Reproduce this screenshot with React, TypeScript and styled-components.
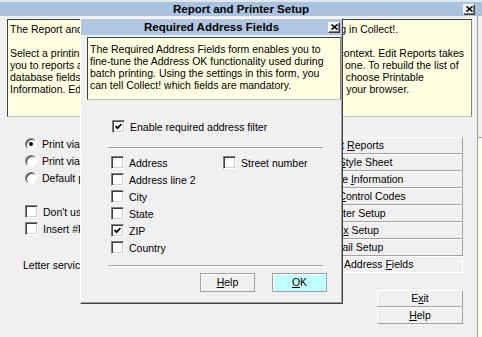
import React from 'react'
import styled, { createGlobalStyle } from 'styled-components'

const GlobalStyle = createGlobalStyle`
  html, body {
    margin: 0;
    padding: 0;
    background: #f0f0f0;
  }
  body {
    font-family: 'Liberation Sans', Arial, sans-serif;
    font-size: 10.5px;
    color: #000;
  }
`

const Screen = styled.div`
  position: relative;
  width: 482px;
  height: 337px;
  overflow: hidden;
  background: #f0f0f0;
`

const MainWindow = styled.div`
  display: flex;
  flex-direction: column;
  height: 100%;
  border-top: 2px solid #dfe7f1;
  box-sizing: border-box;
`

const TitleBar = styled.div<{ $height: number; $closeRight: number }>`
  display: grid;
  grid-template-columns: 1fr auto 1fr;
  align-items: center;
  height: ${({ $height }) => $height}px;
  flex: 0 0 auto;
  background: #a9c2df;
  font-weight: bold;
  font-size: 11.5px;
  white-space: nowrap;

  & > :last-child {
    justify-self: end;
    margin-right: ${({ $closeRight }) => $closeRight}px;
  }
`

const TitleText = styled.span`
  grid-column: 2;
  line-height: 14px;
`

const CloseButton = styled.div`
  display: flex;
  align-items: center;
  justify-content: center;
  width: 12px;
  height: 11px;
  box-sizing: border-box;
  background: #f0f0f0;
  border: 1px solid;
  border-color: #fff #404040 #404040 #fff;
  box-shadow: inset -1px -1px 0 #808080;
`

const Body = styled.div`
  display: flex;
  flex: 1;
`

const MainPane = styled.div`
  display: flex;
  flex-direction: column;
  width: 477px;
  border-right: 1px solid #a0a0a0;
`

const SideStrip = styled.div`
  flex: 1;
  display: flex;
  flex-direction: column;
`

const SidePanel = styled.div`
  margin-top: 121px;
  flex: 1;
  background: #fffef0;
  border-top: 1px solid #a0a0a0;
`

const InfoBox = styled.div<{ $width: number; $height: number; $padTop: number }>`
  box-sizing: border-box;
  width: ${({ $width }) => $width}px;
  height: ${({ $height }) => $height}px;
  padding: ${({ $padTop }) => $padTop}px 2px 0 2px;
  background: #ffffe1;
  border: 1px solid #404040;
  border-right-color: #808080;
  border-bottom-color: #c0c0c0;
  line-height: 12px;
  white-space: nowrap;
  overflow: hidden;
`

const MainInfo = styled(InfoBox)`
  margin: 3px 0 0 7px;
`

const Controls = styled.div`
  display: flex;
  justify-content: space-between;
  padding: 0 14px 0 25px;
`

const LeftColumn = styled.div`
  display: flex;
  flex-direction: column;
  padding-top: 18px;
`

const Row = styled.div<{ $gap?: number }>`
  display: flex;
  align-items: center;
  gap: ${({ $gap }) => $gap ?? 5}px;
  height: 17px;
  white-space: nowrap;
`

const Spacer = styled.div<{ $size: number }>`
  height: ${({ $size }) => $size}px;
  flex: 0 0 auto;
`

const RadioCircle = styled.span<{ $on?: boolean }>`
  position: relative;
  width: 12px;
  height: 12px;
  box-sizing: border-box;
  border-radius: 50%;
  background: #fff;
  border: 1px solid;
  border-color: #808080 #fff #fff #808080;
  box-shadow: inset 1px 1px 0 #404040;

  &::after {
    content: '';
    display: ${({ $on }) => ($on ? 'block' : 'none')};
    position: absolute;
    left: 3px;
    top: 3px;
    width: 4px;
    height: 4px;
    border-radius: 50%;
    background: #000;
  }
`

const CheckBox = styled.span`
  display: flex;
  align-items: center;
  justify-content: center;
  width: 13px;
  height: 13px;
  box-sizing: border-box;
  background: #fff;
  border: 1px solid;
  border-color: #808080 #fff #fff #808080;
  box-shadow: inset 1px 1px 0 #404040, inset -1px -1px 0 #d4d0c8;
`

const RightColumn = styled.div`
  display: flex;
  flex-direction: column;
  align-items: flex-end;
  padding-top: 20px;
`

const ButtonStack = styled.div<{ $width: number }>`
  display: flex;
  flex-direction: column;
  width: ${({ $width }) => $width}px;
`

const SideButton = styled.div<{ $active?: boolean }>`
  box-sizing: border-box;
  height: 17px;
  line-height: 15px;
  text-align: ${({ $active }) => ($active ? 'left' : 'center')};
  padding-left: ${({ $active }) => ($active ? '96px' : '0')};
  white-space: nowrap;
  border: 1px solid;
  border-color: ${({ $active }) =>
    $active ? '#fff #fff #fff #fff' : '#fff #a0a0a0 #a0a0a0 #fff'};
`

const U = styled.span`
  text-decoration: underline;
`

const Dialog = styled.div`
  position: absolute;
  left: 80px;
  top: 18px;
  width: 263px;
  height: 286px;
  box-sizing: border-box;
  display: flex;
  flex-direction: column;
  background: #f0f0f0;
  border: 1px solid;
  border-color: #fff #404040 #404040 #fff;
  box-shadow: inset -1px -1px 0 #a0a0a0;
`

const DialogTitleBar = styled(TitleBar)`
  background: #afc6e1;
`

const DialogInfo = styled(InfoBox)`
  margin: 2px 0 0 6px;
`

const OptionRow = styled(Row)<{ $indent: number }>`
  margin-left: ${({ $indent }) => $indent}px;
`

const Separator = styled.div<{ $top: number }>`
  margin: ${({ $top }) => $top}px 0 0 27px;
  width: 215px;
  height: 0;
  border-top: 1px solid #a0a0a0;
  border-bottom: 1px solid #fff;
`

const FieldGrid = styled.div`
  display: grid;
  grid-template-columns: 112px auto;
  margin: 5px 0 0 30px;
`

const DialogButtons = styled.div`
  display: flex;
  justify-content: flex-end;
  gap: 17px;
  margin-top: 6px;
  padding-right: 15px;
`

const PushButton = styled.div<{ $primary?: boolean }>`
  box-sizing: border-box;
  width: 55px;
  height: 19px;
  line-height: 17px;
  text-align: center;
  background: ${({ $primary }) => ($primary ? '#c0ffff' : '#f0f0f0')};
  border: 1px solid #a0a0a0;
  box-shadow: inset 1px 1px 0 #fff;
`

function CloseX() {
  return (
    <CloseButton>
      <svg width="7" height="6" viewBox="0 0 7 6">
        <path d="M0.5 0.5 L6.5 5.5 M6.5 0.5 L0.5 5.5" stroke="#000" strokeWidth="1.6" />
      </svg>
    </CloseButton>
  )
}

function Check({ on, label }: { on?: boolean; label: string }) {
  return (
    <>
      <CheckBox>
        {on && (
          <svg width="9" height="9" viewBox="0 0 9 9">
            <path d="M1.5 4 L3.5 6.2 L7.5 2" stroke="#000" strokeWidth="1.8" fill="none" />
          </svg>
        )}
      </CheckBox>
      <span>{label}</span>
    </>
  )
}

const fields = [
  { label: 'Address', on: false },
  { label: 'Street number', on: false },
  { label: 'Address line 2', on: false },
  null,
  { label: 'City', on: false },
  null,
  { label: 'State', on: false },
  null,
  { label: 'ZIP', on: true },
  null,
  { label: 'Country', on: false },
  null,
]

const sideButtons: React.ReactNode[] = [
  <>Edit <U>R</U>eports</>,
  <>Edit <U>S</U>tyle Sheet</>,
  <>Printable <U>I</U>nformation</>,
  <>Printer <U>C</U>ontrol Codes</>,
  <>Printer Setup</>,
  <>Fa<U>x</U> Setup</>,
  <>Email Setup</>,
]

export default function App() {
  return (
    <Screen>
      <GlobalStyle />
      <MainWindow>
        <TitleBar $height={14} $closeRight={7}>
          <TitleText>Report and Printer Setup</TitleText>
          <CloseX />
        </TitleBar>
        <Body>
          <MainPane>
            <MainInfo $width={465} $height={98} $padTop={3}>
              The Report and Printer Setup form lets you control all aspects of printing in Collect!.
              <br />
              <br />
              Select a printing method and click a button to edit settings for selected context. Edit Reports takes
              <br />
              you to reports and forms where you may design a new report, or modify one. To rebuild the list of
              <br />
              database fields available for printing, open your Reports menu and then choose Printable
              <br />
              Information. Edit Style Sheet changes how reports look, when viewed in your browser.
            </MainInfo>
            <Controls>
              <LeftColumn>
                <Row>
                  <RadioCircle $on />
                  <span>Print via Windows printer driver</span>
                </Row>
                <Row>
                  <RadioCircle />
                  <span>Print via printer control codes</span>
                </Row>
                <Row>
                  <RadioCircle />
                  <span>Default printer</span>
                </Row>
                <Spacer $size={17} />
                <Row>
                  <Check label="Don't use printer fonts" />
                </Row>
                <Row>
                  <Check label="Insert #FF between letters" />
                </Row>
                <Spacer $size={19} />
                <Row>
                  <span style={{ marginLeft: -2 }}>Letter service provider</span>
                </Row>
              </LeftColumn>
              <RightColumn>
                <ButtonStack $width={216}>
                  {sideButtons.map((b, i) => (
                    <SideButton key={i}>{b}</SideButton>
                  ))}
                  <SideButton $active>
                    Address <U>F</U>ields
                  </SideButton>
                </ButtonStack>
                <Spacer $size={17} />
                <ButtonStack $width={86}>
                  <SideButton>
                    E<U>x</U>it
                  </SideButton>
                  <SideButton>
                    <U>H</U>elp
                  </SideButton>
                </ButtonStack>
              </RightColumn>
            </Controls>
          </MainPane>
          <SideStrip>
            <SidePanel />
          </SideStrip>
        </Body>
      </MainWindow>

      <Dialog>
        <DialogTitleBar $height={16} $closeRight={2}>
          <TitleText>Required Address Fields</TitleText>
          <CloseX />
        </DialogTitleBar>
        <DialogInfo $width={254} $height={63} $padTop={5}>
          The Required Address Fields form enables you to
          <br />
          fine-tune the Address OK functionality used during
          <br />
          batch printing. Using the settings in this form, you
          <br />
          can tell Collect! which fields are mandatory.
        </DialogInfo>
        <OptionRow $indent={31} style={{ marginTop: 18 }}>
          <Check on label="Enable required address filter" />
        </OptionRow>
        <Separator $top={12} />
        <FieldGrid>
          {fields.map((f, i) => (
            <Row key={i}>{f && <Check on={f.on} label={f.label} />}</Row>
          ))}
        </FieldGrid>
        <Separator $top={9} />
        <DialogButtons>
          <PushButton>
            <U>H</U>elp
          </PushButton>
          <PushButton $primary>
            <U>O</U>K
          </PushButton>
        </DialogButtons>
      </Dialog>
    </Screen>
  )
}
